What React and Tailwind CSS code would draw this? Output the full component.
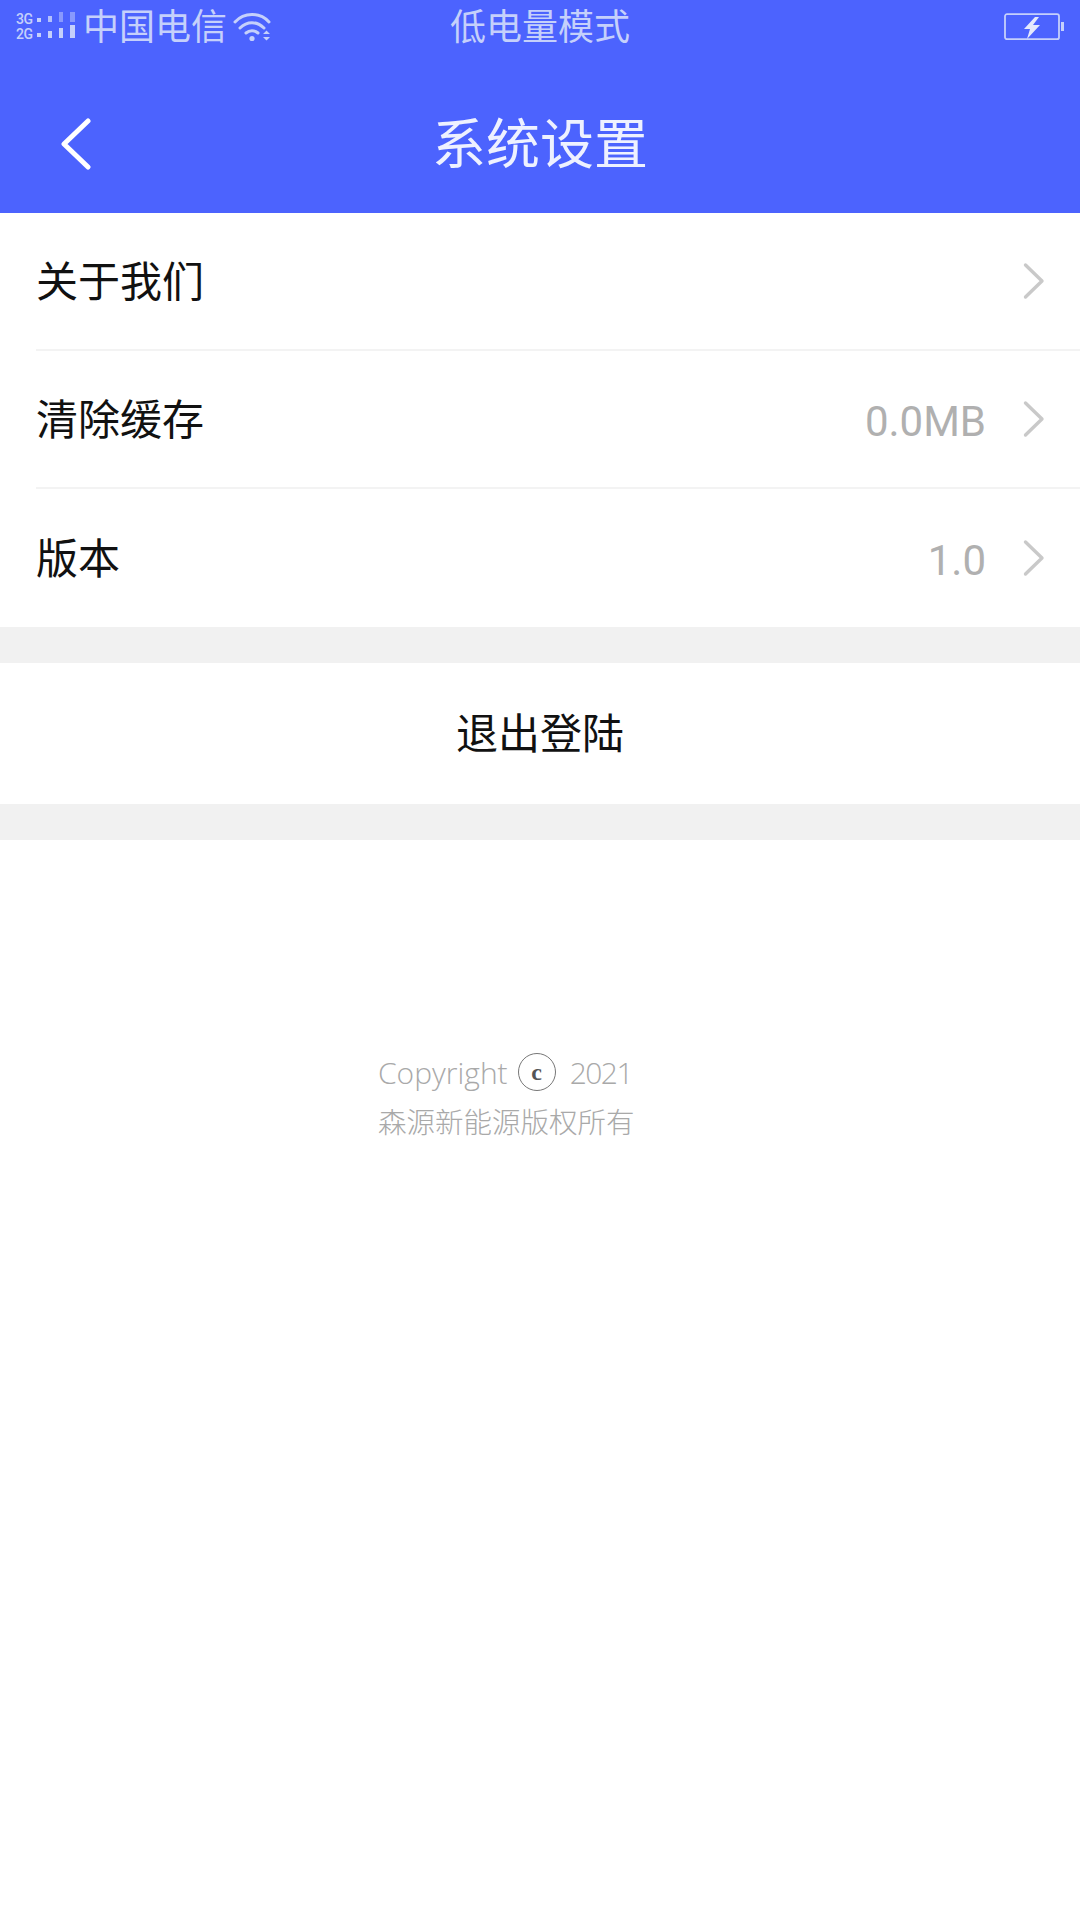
import React from "react";

const CJK = "font-['Inter','Noto_Sans_CJK_SC',sans-serif]";

const Chevron = () => (
  <svg width="24" height="38" viewBox="0 0 24 38" fill="none" className="ml-[36px] mr-[-2px]">
    <path d="M3.5 3 L20 19 L3.5 35" stroke="#c9c9c9" strokeWidth="3.4" strokeLinecap="round" strokeLinejoin="round" />
  </svg>
);

const SignalIcon = () => (
  <div className="relative w-[62px] h-[30px] text-[#c5d0fb]">
    <span className="absolute left-0 top-[0px] text-[14px] leading-[14px] font-medium tracking-[-0.5px] font-['Roboto',sans-serif]">3G</span>
    <span className="absolute left-0 top-[15px] text-[14px] leading-[14px] font-medium tracking-[-0.5px] font-['Roboto',sans-serif]">2G</span>
    <svg width="62" height="30" viewBox="0 0 62 30" className="absolute left-0 top-0" fill="currentColor">
      <rect x="21" y="6" width="4" height="4" />
      <rect x="21" y="21" width="4" height="4" />
      <rect x="32" y="4" width="4" height="6" opacity="0.85" />
      <rect x="32" y="19" width="4" height="7" />
      <rect x="43" y="0" width="4" height="10" opacity="0.5" />
      <rect x="43" y="16" width="4" height="10" />
      <rect x="54" y="0" width="5" height="10" opacity="0.5" />
      <rect x="54" y="13" width="5" height="13" />
    </svg>
  </div>
);

const WifiIcon = () => (
  <svg width="40" height="32" viewBox="0 0 40 32" fill="none" stroke="#c5d0fb" strokeWidth="3" strokeLinecap="round">
    <path d="M2 11 C11 1 27 1 36 11" />
    <path d="M7 17 C14 10 24 10 31 17" />
    <path d="M13 22 C16.5 19 21.5 19 25 22" />
    <circle cx="19" cy="27.5" r="2.6" fill="#c5d0fb" stroke="none" />
    <path d="M30 23 L33.5 19.5 L37 23 Z M30 26 L33.5 29.5 L37 26 Z" fill="#c5d0fb" stroke="none" />
  </svg>
);

const BatteryIcon = () => (
  <svg width="60" height="28" viewBox="0 0 60 28" fill="none">
    <rect x="1" y="1.2" width="54" height="25" rx="2" stroke="#c5d0fb" strokeWidth="1.8" />
    <rect x="57" y="9" width="3.5" height="9" fill="#c5d0fb" />
    <path d="M31 4 L20 16 H26 L23 26 L36 12 H29 L35 4 Z" fill="#e4e9fd" />
  </svg>
);

const Row = ({ label, value, last }) => (
  <div className={`flex items-center h-[138px] ml-9 pr-[36px] ${last ? "" : "border-b-2 border-[#f3f3f3]"}`}>
    <span className="flex-1 text-[42px] text-[#111]">{label}</span>
    {value && <span className="mt-[4px] text-[42px] text-[#b0b0b0] font-['Roboto',sans-serif]">{value}</span>}
    <Chevron />
  </div>
);

export default function App() {
  return (
    <div className={`w-[1080px] h-[1920px] bg-white ${CJK}`}>
      {/* header */}
      <div className="bg-[#4c63fe] h-[213px]">
        <div className="relative flex items-center h-[54px] px-[16px]">
          <SignalIcon />
          <span className="ml-[5px] text-[36px] leading-[54px] text-[#c5d0fb]">中国电信</span>
          <span className="ml-[6px]"><WifiIcon /></span>
          <span className="absolute left-0 right-0 text-center text-[36px] text-[#c5d0fb]">低电量模式</span>
          <span className="absolute right-[16px] top-[13px]"><BatteryIcon /></span>
        </div>
        <div className="relative flex items-center justify-center h-[159px] pt-[22px]">
          <svg width="34" height="52" viewBox="0 0 34 52" fill="none" className="absolute left-[59px] top-[64px]">
            <path d="M29 3 L5 26 L29 49" stroke="#fff" strokeWidth="5" strokeLinecap="round" strokeLinejoin="round" />
          </svg>
          <span className="text-[54px] text-[#eef1ff]">系统设置</span>
        </div>
      </div>

      <Row label="关于我们" />
      <Row label="清除缓存" value="0.0MB" />
      <Row label="版本" value="1.0" last />

      <div className="h-[36px] bg-[#f1f1f1]" />
      <div className="h-[141px] flex items-center justify-center text-[42px] text-[#111]">退出登陆</div>
      <div className="h-[36px] bg-[#f1f1f1]" />

      {/* copyright */}
      <div className="ml-[378px] mt-[208px] text-[#a9a9a9]">
        <div className="flex items-center h-[48px] text-[30px] font-light">
          <span className="font-['Open_Sans',sans-serif] font-light">Copyright</span>
          <span className="ml-[10px] w-[38px] h-[38px] rounded-full border border-[#777] flex items-center justify-center text-[24px] font-semibold text-[#555] leading-none font-['Liberation_Serif',serif]">c</span>
          <span className="ml-[14px] tracking-[-1.5px] font-['Open_Sans',sans-serif] font-light">2021</span>
        </div>
        <div className="mt-[2px] text-[28.5px] leading-[50px] font-light">森源新能源版权所有</div>
      </div>
    </div>
  );
}
